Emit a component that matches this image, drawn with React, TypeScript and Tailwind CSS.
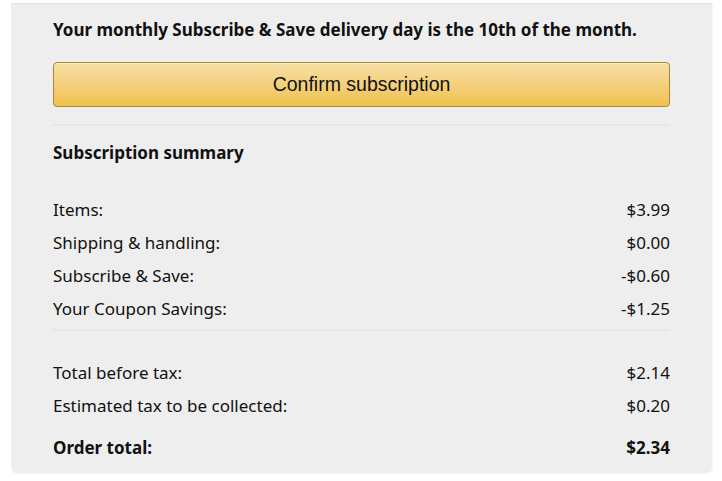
const rows = [
  { label: "Items:", value: "$3.99" },
  { label: "Shipping & handling:", value: "$0.00" },
  { label: "Subscribe & Save:", value: "-$0.60" },
  { label: "Your Coupon Savings:", value: "-$1.25" },
];

const totals = [
  { label: "Total before tax:", value: "$2.14" },
  { label: "Estimated tax to be collected:", value: "$0.20" },
];

export default function App() {
  return (
    <div className="h-[481px] w-[722px] bg-white pt-[3px] font-['Noto_Sans',sans-serif] text-[#111111]">
      <div className="ml-[11px] w-[701px] rounded-b-[6px] border-t border-[#e4e4e4] bg-[#eeeeee] px-[42px] pb-[9px] pt-[14px] shadow-[1px_1px_1px_rgba(0,0,0,0.04)]">
        <p className="h-[24px] whitespace-nowrap text-[17px] font-bold leading-[24px]">
          Your monthly Subscribe &amp; Save delivery day is the 10th of the month.
        </p>

        <button className="mt-[20px] flex h-[45px] w-full items-center justify-center rounded-[4px] border border-[#a88734] bg-gradient-to-b from-[#f7dfa5] to-[#f0c14b] font-['Liberation_Sans',Arial,sans-serif] text-[19.5px] text-[#111111] shadow-[inset_0_1px_0_rgba(255,255,255,0.4)]">
          Confirm subscription
        </button>

        <div className="mt-[17px] border-t-2 border-[#e6e6e6]" />

        <h3 className="mt-[15px] h-[24px] text-[17px] font-bold leading-[24px]">Subscription summary</h3>

        <div className="mt-[28px] text-[17px]">
          {rows.map((r) => (
            <div key={r.label} className="flex h-[33px] items-center justify-between">
              <span>{r.label}</span>
              <span>{r.value}</span>
            </div>
          ))}
        </div>

        <div className="mt-[4px] border-t-2 border-[#e6e6e6]" />

        <div className="mt-[25px] text-[17px]">
          {totals.map((r) => (
            <div key={r.label} className="flex h-[33px] items-center justify-between">
              <span>{r.label}</span>
              <span>{r.value}</span>
            </div>
          ))}
          <div className="mt-[9px] flex h-[33px] items-center justify-between font-bold">
            <span>Order total:</span>
            <span>$2.34</span>
          </div>
        </div>
      </div>
    </div>
  );
}
